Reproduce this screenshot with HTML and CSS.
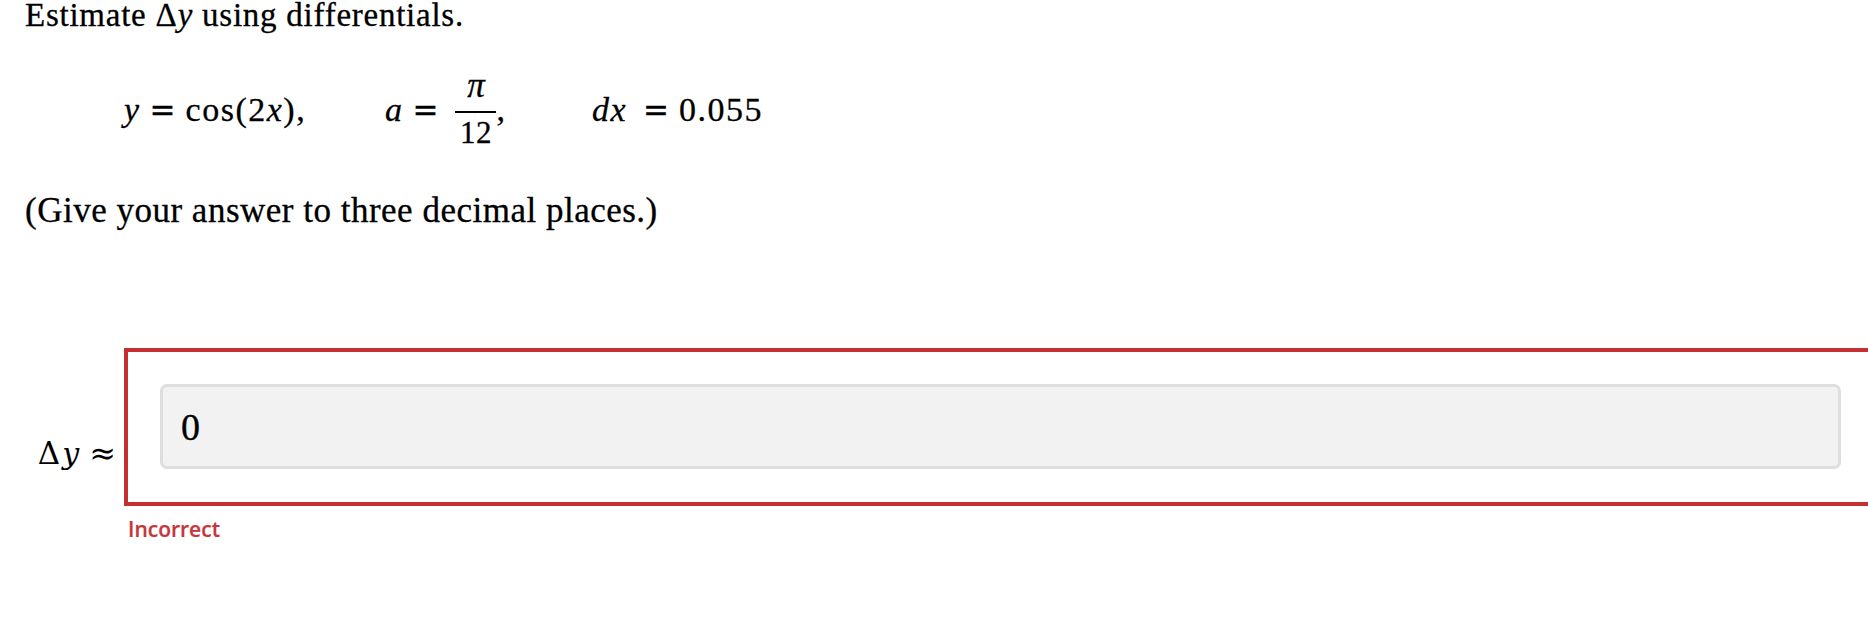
FILE: index.html
```html
<!DOCTYPE html>
<html lang="en">
<head>
<meta charset="utf-8">
<title>Estimate Δy using differentials</title>
<link rel="stylesheet" href="styles.css">
</head>
<body>
<main class="question">
  <p class="prompt">Estimate <span class="sym">Δ</span><i>y</i> using differentials.</p>
  <div class="eqrow">
    <span class="eq"><i>y</i><span class="op">=</span>cos(2<i>x</i>),</span>
    <span class="eq"><i>a</i><span class="op">=</span><span class="frac"><span class="num"><i>π</i></span><span class="den">12</span></span>,</span>
    <span class="eq"><i>dx</i><span class="op op-wide">=</span>0.055</span>
  </div>
  <p class="prompt hint">(Give your answer to three decimal places.)</p>
  <div class="answer-grid">
    <label class="answer-label" for="ans"><span class="lbl-d">Δ</span><i class="lbl-y">y</i><span class="lbl-approx">≈</span></label>
    <div class="answer-box">
      <input id="ans" class="answer-input" type="text" value="0" readonly>
    </div>
    <div class="feedback">Incorrect</div>
  </div>
</main>
</body>
</html>
```

FILE: styles.css
```css
html, body {
  margin: 0;
  padding: 0;
  background: #ffffff;
  overflow: hidden;
}

body {
  width: 1868px;
  height: 632px;
  color: #000000;
  font-family: "Liberation Serif", "Times New Roman", serif;
}

.question {
  display: flex;
  flex-direction: column;
}

.prompt {
  margin: 0;
  padding-left: 25px;
  font-size: 33px;
  line-height: 30px;
  letter-spacing: 0.75px;
  -webkit-text-stroke: 0.3px #000000;
}

.sym {
  letter-spacing: 1px;
}

.hint {
  margin-top: 43px;
  font-size: 35px;
  letter-spacing: 0.5px;
}

.eqrow {
  margin-top: 40px;
  padding-left: 124px;
  display: grid;
  grid-template-columns: 261px 207px auto;
  align-items: baseline;
  font-size: 34px;
  line-height: 36px;
  letter-spacing: 1.5px;
  -webkit-text-stroke: 0.3px #000000;
}

.eq {
  white-space: nowrap;
}

.op {
  font-family: "DejaVu Serif", serif;
  font-size: 31px;
  letter-spacing: 0;
  margin: 0 10px 0 9px;
}

.op-wide {
  margin-left: 16px;
}

.frac {
  display: inline-block;
  text-align: center;
  vertical-align: -22px;
  margin-left: 7px;
  width: 41px;
  font-size: 31px;
  letter-spacing: 0;
}

.num {
  display: block;
  font-size: 35px;
  line-height: 32px;
  padding-bottom: 9px;
}

.den {
  display: block;
  line-height: 40px;
  border-top: 2px solid #000000;
  letter-spacing: 0.5px;
}

.answer-grid {
  margin-top: 122px;
  display: grid;
  grid-template-columns: 124px 1fr;
  grid-template-rows: auto auto;
}

.answer-label {
  grid-column: 1;
  grid-row: 1;
  align-self: end;
  justify-self: end;
  padding-right: 8px;
  padding-bottom: 37px;
  font-family: "DejaVu Serif", serif;
  font-size: 30px;
  line-height: 30px;
  white-space: nowrap;
}

.lbl-d {
  font-size: 31px;
}

.lbl-y {
  margin-left: 2px;
}

.lbl-approx {
  margin-left: 10px;
  font-size: 32px;
}

.answer-box {
  grid-column: 2;
  grid-row: 1;
  margin-right: -9px;
  border: 4px solid #c3302f;
  padding: 32px 32px 33px 32px;
}

.answer-input {
  display: block;
  box-sizing: border-box;
  width: 100%;
  height: 85px;
  margin: 0;
  padding: 0 18px;
  border: 3px solid #dedede;
  border-radius: 7px;
  background: #f2f2f2;
  font-family: "Liberation Serif", "Times New Roman", serif;
  font-size: 38px;
  color: #000000;
  -webkit-text-stroke: 0.4px #000000;
  outline: none;
}

.feedback {
  grid-column: 2;
  grid-row: 2;
  margin-top: 9px;
  padding-left: 4px;
  font-family: "Open Sans", "Liberation Sans", sans-serif;
  font-weight: 600;
  font-size: 21px;
  line-height: 28px;
  color: #c8353a;
  -webkit-text-stroke: 0.2px #c8353a;
}
```
